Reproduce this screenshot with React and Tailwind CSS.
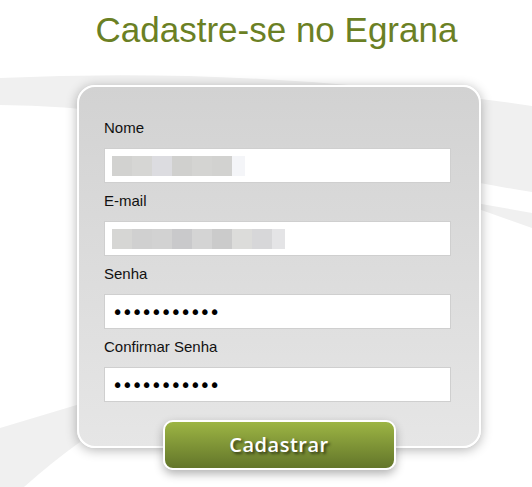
import React from 'react';

const nomeBlocks = ['#d2d2d0', '#d6d6d4', '#dcdce0', '#d0d0ce', '#d4d4d2', '#d2d2d0'];
const emailBlocks = ['#d6d6d4', '#d0d0d0', '#d2d2d2', '#c9c9cb', '#d4d4d4', '#cbcbcb', '#dcdcda', '#d7d7d9'];

const Background = () => (
  <svg className="absolute inset-0 w-full h-full" viewBox="0 0 532 487" preserveAspectRatio="none">
    <path d="M0,78 Q260,66 532,106 L532,192 Q500,187 480,183 C320,150 160,106 0,105 Z" fill="#f0f0f0" />
    <path d="M470,202 L532,213 L532,228 L470,206 Z" fill="#f0f0f0" />
    <path d="M0,428 L80,404 L80,442 Q52,462 24,487 L0,487 Z" fill="#f0f0f0" />
  </svg>
);

const Field = ({ label, children }) => (
  <div className="mb-2">
    <label className="block text-[15px] leading-5 text-[#111] mb-2.5">{label}</label>
    <div className="h-[35px] w-[347px] bg-white border border-[#cfcfcf] flex items-center">
      {children}
    </div>
  </div>
);

const Blurred = ({ colors, tail }) => (
  <div className="flex ml-[7px] h-5">
    {colors.map((c, i) => (
      <div key={i} className="w-5 h-5" style={{ backgroundColor: c }} />
    ))}
    <div className="w-[13px] h-5" style={{ backgroundColor: tail }} />
  </div>
);

const Password = () => (
  <input
    type="password"
    readOnly
    value="12345678901"
    className="w-full h-full px-[7px] bg-transparent outline-none text-[19px] tracking-[-1.5px] text-black font-['DejaVu_Sans',sans-serif]"
  />
);

const App = () => {
  return (
    <div className="relative min-h-[487px] bg-white overflow-hidden font-['Liberation_Sans',Arial,sans-serif]">
      <Background />
      <div className="relative w-[404px] ml-[77px] flex flex-col items-center pt-[10px]">
        <h1 className="text-[35px] leading-[40px] text-[#6b8024] whitespace-nowrap -ml-[5px]">
          Cadastre-se no Egrana
        </h1>

        <div className="mt-[35px] w-[404px] rounded-[18px] border-2 border-white bg-gradient-to-b from-[#d2d2d2] to-[#e6e6e6] shadow-[0_2px_12px_rgba(0,0,0,0.3)] pt-[31px] pb-[36px] pl-[25px]">
          <Field label="Nome">
            <Blurred colors={nomeBlocks} tail="#f4f5f8" />
          </Field>
          <Field label="E-mail">
            <Blurred colors={emailBlocks} tail="#e4e4e6" />
          </Field>
          <Field label="Senha">
            <Password />
          </Field>
          <Field label="Confirmar Senha">
            <Password />
          </Field>
        </div>

        <button className="relative -mt-[28px] w-[233px] h-[50px] rounded-[10px] border-2 border-white bg-gradient-to-b from-[#9db544] to-[#63762a] shadow-[0_4px_10px_rgba(0,0,0,0.3)] text-white text-[20px] font-semibold tracking-[0.5px] font-['Open_Sans',sans-serif] [text-shadow:2px_2px_3px_rgba(0,0,0,0.6)]">
          Cadastrar
        </button>
      </div>
    </div>
  );
};

export default App;
